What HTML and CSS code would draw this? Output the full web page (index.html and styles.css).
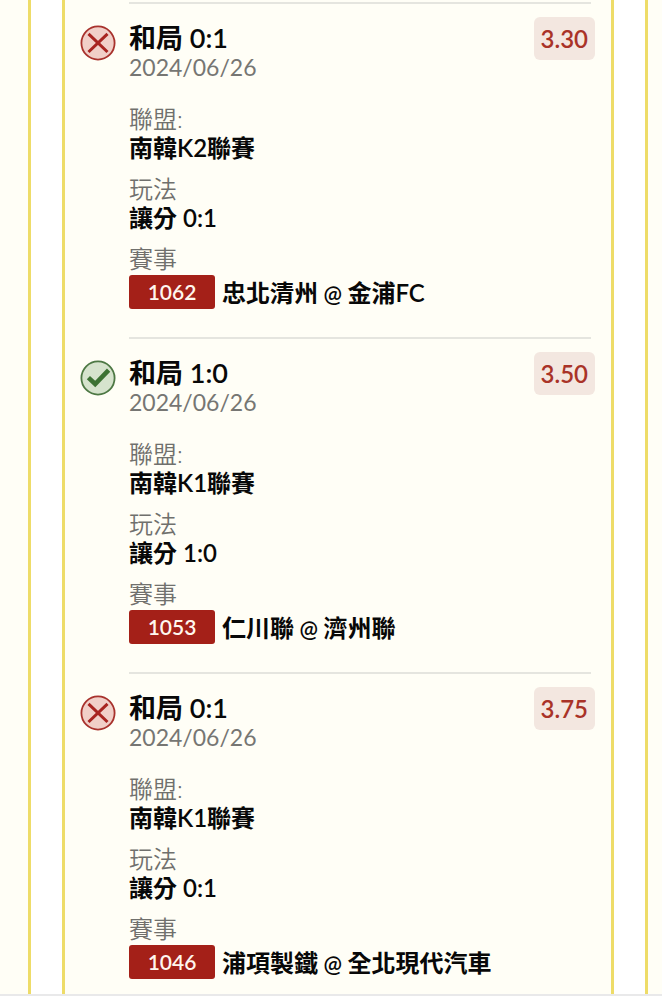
FILE: index.html
```html
<!DOCTYPE html>
<html lang="zh-Hant">
<head>
<meta charset="utf-8">
<meta name="viewport" content="width=device-width, initial-scale=1">
<title>2024/06/26</title>
<link rel="stylesheet" href="styles.css">
</head>
<body>
<div class="slides">
  <div class="slide slide-prev"></div>
  <main class="slide slide-current">
    <article class="bet">
      <svg class="status lost" viewBox="0 0 36 36" aria-hidden="true"><circle cx="18" cy="18" r="16.6"/><path d="M8.5 8.8 27.5 27M27.5 8.8 8.5 27"/></svg>
      <div class="bet-body">
        <header class="bet-head">
          <div class="bet-title"><h2>和局 0:1</h2><time datetime="2024-06-26">2024/06/26</time></div>
          <span class="odds">3.30</span>
        </header>
        <dl class="details">
          <div><dt>聯盟:</dt><dd>南韓K2聯賽</dd></div>
          <div><dt>玩法</dt><dd>讓分 0:1</dd></div>
          <div><dt>賽事</dt><dd class="match"><span class="code">1062</span><span class="teams">忠北清州<span class="at"> @ </span>金浦FC</span></dd></div>
        </dl>
      </div>
    </article>
    <article class="bet">
      <svg class="status won" viewBox="0 0 36 36" aria-hidden="true"><circle cx="18" cy="18" r="16.6"/><path d="M8.4 17.6 15.2 24 28.6 10.2"/></svg>
      <div class="bet-body">
        <header class="bet-head">
          <div class="bet-title"><h2>和局 1:0</h2><time datetime="2024-06-26">2024/06/26</time></div>
          <span class="odds">3.50</span>
        </header>
        <dl class="details">
          <div><dt>聯盟:</dt><dd>南韓K1聯賽</dd></div>
          <div><dt>玩法</dt><dd>讓分 1:0</dd></div>
          <div><dt>賽事</dt><dd class="match"><span class="code">1053</span><span class="teams">仁川聯<span class="at"> @ </span>濟州聯</span></dd></div>
        </dl>
      </div>
    </article>
    <article class="bet">
      <svg class="status lost" viewBox="0 0 36 36" aria-hidden="true"><circle cx="18" cy="18" r="16.6"/><path d="M8.5 8.8 27.5 27M27.5 8.8 8.5 27"/></svg>
      <div class="bet-body">
        <header class="bet-head">
          <div class="bet-title"><h2>和局 0:1</h2><time datetime="2024-06-26">2024/06/26</time></div>
          <span class="odds">3.75</span>
        </header>
        <dl class="details">
          <div><dt>聯盟:</dt><dd>南韓K1聯賽</dd></div>
          <div><dt>玩法</dt><dd>讓分 0:1</dd></div>
          <div><dt>賽事</dt><dd class="match"><span class="code">1046</span><span class="teams">浦項製鐵<span class="at"> @ </span>全北現代汽車</span></dd></div>
        </dl>
      </div>
    </article>
  </main>
  <div class="slide slide-next"></div>
</div>
</body>
</html>
```
FILE: styles.css
```css
* { box-sizing: border-box; }

body {
  margin: 0;
  background: #fff;
  color: #080808;
  font: 24px/30px Lato, "Noto Sans CJK TC", sans-serif;
}

h2, dl, dd { margin: 0; }

.slides {
  display: flex;
  gap: 31px;
  border-bottom: 2px solid #e9e9ea;
}

.slide {
  background: #fffef6;
  border: 0 solid #eedc68;
}

.slide-prev { flex: 0 0 31px; border-right-width: 3px; }
.slide-next { flex: 0 0 17px; border-left-width: 3px; }

.slide-current {
  flex: 1;
  padding: 2px 20px 0 15px;
  border-width: 0 3px;
}

.bet {
  display: flex;
  gap: 13px;
}

.status {
  flex: none;
  width: 36px;
  height: 36px;
  margin-top: 23px;
  fill: none;
}

.status circle { stroke-width: 1.8; }
.lost { stroke: #a82420; }
.lost circle { fill: #f1cfc8; stroke: #a8322d; }
.lost path { stroke-width: 3; }
.won { stroke: #3d7233; }
.won circle { fill: #d6e3cd; stroke: #4d7844; }
.won path { stroke-width: 4.6; }

.bet-body {
  flex: 1;
  padding: 13px 0 28px;
  border-top: 2px solid #e5e5df;
}

.bet:last-child .bet-body { padding-bottom: 15px; }

.bet-head {
  display: flex;
  justify-content: space-between;
  align-items: flex-start;
}

.bet-title { padding-top: 6px; }

h2 {
  font-size: 27px;
  font-weight: 600;
  line-height: 30px;
}

time, dt {
  display: block;
  color: #767673;
  line-height: 28px;
}

time { font-size: 23px; }

dt { font-weight: 350; color: #70706d; }

.odds {
  min-width: 61px;
  margin-right: -4px;
  padding: 0 7px;
  border-radius: 6px;
  background: #f3e7e0;
  color: #a93328;
  font-weight: 600;
  line-height: 43px;
  text-align: center;
}

.details {
  display: grid;
  gap: 12px;
  margin-top: 24px;
}

dd { font-weight: 600; }

.match {
  display: flex;
  align-items: center;
  gap: 7px;
  padding-top: 2px;
  line-height: 34px;
}

.code {
  width: 86px;
  border-radius: 3px;
  background: #a42018;
  color: #fff6ee;
  font-size: 21px;
  text-align: center;
}

.teams { padding-top: 2px; line-height: 30px; }

.at { font-size: 22px; }
```
